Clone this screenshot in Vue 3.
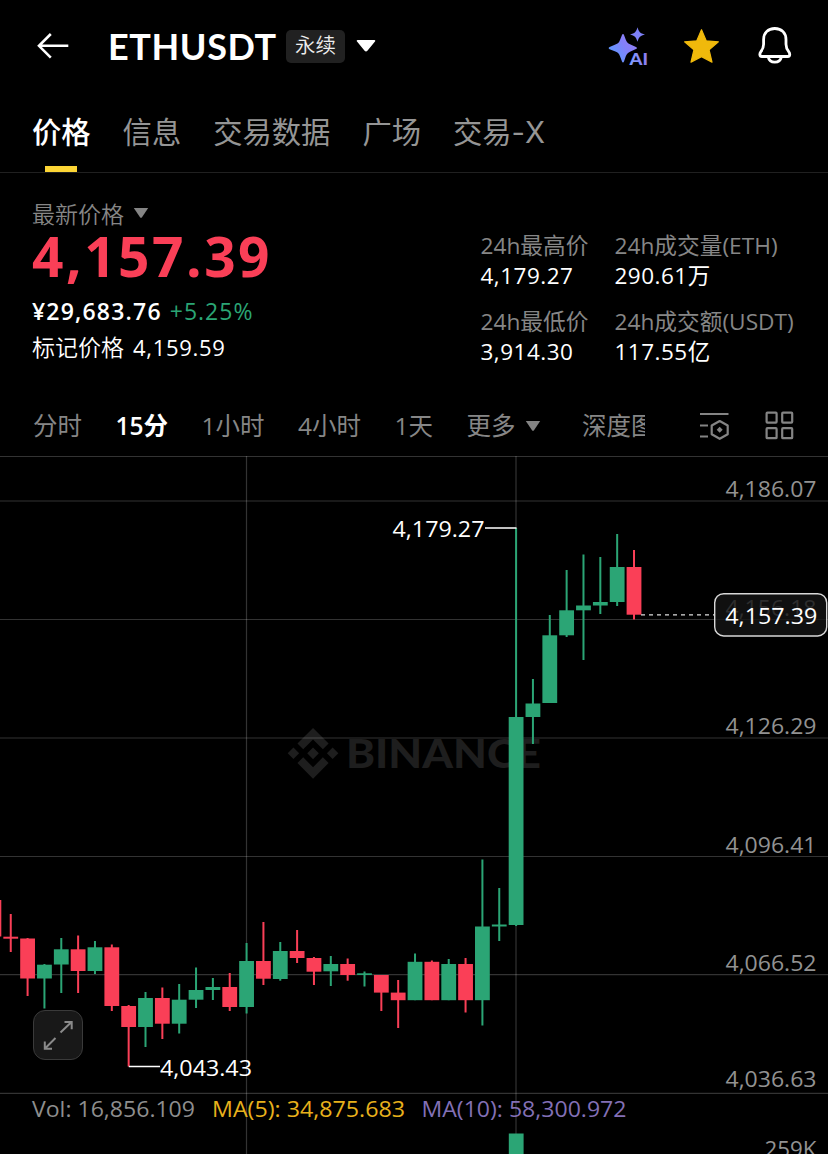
<!-- eslint-disable vue/multi-word-component-names -->
<!--
  组件名称: 合约行情页
  功能描述: 展示交易对最新价格、24h 数据以及 15 分钟 K 线图。
-->
<template>
  <div class="market-page">
    <!-- 顶部导航 -->
    <header class="top-bar">
      <svg class="back-icon" viewBox="36 32 34 28" fill="none" stroke="#fff" stroke-width="2.6">
        <path d="M68.3 45.8H39M50.8 34L39 45.8l11.8 11.8" />
      </svg>
      <h1 class="symbol">ETHUSDT</h1>
      <span class="badge">永续</span>
      <svg class="symbol-arrow" viewBox="0 0 20 14" fill="#fff">
        <path d="M1.6 1h16.8c.9 0 1.2.8.6 1.4l-7.6 9.4c-.8.9-2 .9-2.8 0L1 2.4C.4 1.8.7 1 1.6 1z" />
      </svg>
      <div class="top-actions">
        <svg class="action-icon" viewBox="608 25 42 42">
          <defs>
            <linearGradient id="ai-grad" gradientUnits="userSpaceOnUse" x1="610" y1="56" x2="640" y2="36">
              <stop offset="0" stop-color="#5a9bff" />
              <stop offset="0.5" stop-color="#8480fa" />
              <stop offset="1" stop-color="#9a80ee" />
            </linearGradient>
            <linearGradient id="ai-text" gradientUnits="userSpaceOnUse" x1="630" y1="60" x2="648" y2="58">
              <stop offset="0" stop-color="#7f9cff" />
              <stop offset="1" stop-color="#8f7af0" />
            </linearGradient>
          </defs>
          <path fill="url(#ai-grad)" d="M623 34c.5 0 .8.4 1 1l1.8 4.8c.9 2.5 1.9 3.5 4.2 4.4l6 2.7c1.2.5 1.2 1.7 0 2.2l-5.500 2.300c-2.700 1.200-3.700 2.200-4.700 4.900l-1.800 5.200c-.4 1.200-1.600 1.200-2 0l-2-5.200c-1-2.700-2-3.700-4.600-4.800l-5.800-2.300c-1.200-.5-1.200-1.600 0-2.100l5.800-2.500c2.500-1 3.600-2 4.600-4.600L622 35c.2-.6.5-1 1-1z" />
          <path fill="#7d80f7" d="M637.5 27.2c1.4 4.8 2.6 5.9 7.5 7.3-4.9 1.4-6.1 2.5-7.5 7.3-1.4-4.8-2.600-5.900-7.500-7.300 4.900-1.400 6.100-2.500 7.500-7.300z" />
          <text class="ai-text" x="629.5" y="65" textLength="18.5" lengthAdjust="spacingAndGlyphs" fill="url(#ai-text)">AI</text>
        </svg>
        <svg class="action-icon" viewBox="681 25 42 42">
          <path fill="#f0b90b" stroke="#f0b90b" stroke-width="1.2" stroke-linejoin="round" d="M701.5 29.7l4.7 11.1 12.2 1-9.3 8 2.9 12.3-10.5-5.5-10.5 5.5 2.9-12.3-9.3-8 12.2-1z" />
        </svg>
        <svg class="action-icon" viewBox="754 25 42 42" fill="none" stroke="#fff" stroke-width="2.8" stroke-linejoin="round">
          <path d="M774.8 28.5c-7 0-11.2 4.7-11.2 11v4.8c0 3.200-.7 4.800-2.700 7.300-1.500 1.900-1.500 4.900.9 4.900h26c2.400 0 2.400-3 .9-4.900-2-2.500-2.700-4.100-2.700-7.300v-4.800c0-6.300-4.200-11-11.200-11z" />
          <path d="M768.2 57c.7 3.2 3.3 5.2 6.6 5.2s5.9-2 6.6-5.2" />
        </svg>
      </div>
    </header>

    <!-- 页签 -->
    <nav class="tabs">
      <button
        v-for="tab in tabs"
        :key="tab"
        class="tab"
        :class="{ active: tab === activeTab }"
        @click="activeTab = tab"
      >
        {{ tab }}
      </button>
    </nav>

    <!-- 价格概览 -->
    <section class="ticker">
      <div class="price-block">
        <div class="price-label">
          最新价格
          <svg class="small-arrow" viewBox="0 0 16 12"><path d="M.8 1h14.4L9 10.2c-.5.7-1.5.7-2 0z" /></svg>
        </div>
        <div class="last-price">4,157.39</div>
        <div class="fiat-row">
          <span class="fiat">¥29,683.76</span>
          <span class="change">+5.25%</span>
        </div>
        <div class="mark-row">标记价格 <span class="mark-price">4,159.59</span></div>
      </div>
      <dl class="stats">
        <div v-for="item in stats" :key="item.label" class="stat">
          <dt>{{ item.label }}</dt>
          <dd>{{ item.value }}</dd>
        </div>
      </dl>
    </section>

    <!-- 周期切换 -->
    <div class="toolbar">
      <div class="intervals">
        <button
          v-for="item in intervals"
          :key="item"
          class="interval"
          :class="{ active: item === activeInterval }"
          @click="activeInterval = item"
        >
          {{ item }}
        </button>
        <button class="interval more">
          更多
          <svg class="small-arrow" viewBox="0 0 16 12"><path d="M.8 1h14.4L9 10.2c-.5.7-1.5.7-2 0z" /></svg>
        </button>
        <button class="interval">深度图</button>
      </div>
      <svg class="setting-icon" viewBox="698 410 34 32" fill="none" stroke="#848484" stroke-width="2.2">
        <path d="M700 414h28.5M700 425.5h8M700 436.5h8" />
        <path d="M719.7 421l8 4.5v8.8l-8 4.5-8-4.5v-8.8z" stroke-linejoin="round" />
        <path d="M719.7 426.8l3 3-3 3-3-3z" fill="#848484" stroke="none" />
      </svg>
      <svg class="grid-icon" viewBox="764 410 32 32" fill="none" stroke="#848484" stroke-width="2.2">
        <rect x="766.6" y="412.6" width="10" height="10" rx=".8" />
        <rect x="782.2" y="412.6" width="10" height="10" rx=".8" />
        <rect x="766.6" y="428.2" width="10" height="10" rx=".8" />
        <rect x="782.2" y="428.2" width="10" height="10" rx=".8" />
      </svg>
    </div>

    <!-- K 线图 -->
    <div class="chart">
      <svg class="chart-svg" viewBox="0 456 828 698">
        <!-- 水印 -->
        <g class="watermark">
          <path
            transform="translate(287.7 728) scale(.4)"
            d="M38.73 53.2l24.6-24.6 24.61 24.62 14.31-14.31L63.33 0l-38.9 38.9zM0 63.31L14.31 49l14.31 14.31-14.31 14.31zM38.73 73.41L63.33 98l24.61-24.6 14.32 14.29-38.93 38.92-38.9-38.89zM98 63.31L112.3 49l14.31 14.31-14.31 14.31zM77.83 63.3L63.32 48.78 48.79 63.3l14.53 14.53z"
          />
          <text x="346" y="767.5" textLength="195" lengthAdjust="spacingAndGlyphs">BINANCE</text>
        </g>

        <!-- 网格 -->
        <g class="grid-lines">
          <line v-for="y in gridY" :key="'h' + y" x1="0" x2="828" :y1="y" :y2="y" />
          <line v-for="x in gridX" :key="'v' + x" :x1="x" :x2="x" y1="456" y2="1154" />
        </g>

        <!-- 蜡烛 -->
        <g v-for="(c, i) in candles" :key="i" :fill="c[4] ? '#2ba575' : '#fa3f57'">
          <rect :x="candleX(i) - 1" :y="c[0]" width="2" :height="c[3] - c[0]" />
          <rect :x="candleX(i) - 7.4" :y="c[1]" width="14.8" :height="c[2] - c[1]" />
        </g>
        <rect x="508.8" y="1133.5" width="14.8" height="21" fill="#2ba575" />

        <!-- 价格刻度 -->
        <text
          v-for="s in scales"
          :key="s.text"
          class="scale"
          :x="816.5 - s.width"
          :y="s.y"
          :textLength="s.width"
          lengthAdjust="spacingAndGlyphs"
        >{{ s.text }}</text>

        <!-- 最高 / 最低价标注 -->
        <g class="mark">
          <path d="M485 528h31.5M128.8 1066.5H160" />
          <text x="392.5" y="536.5" textLength="92" lengthAdjust="spacingAndGlyphs">4,179.27</text>
          <text x="160" y="1075.5" textLength="92" lengthAdjust="spacingAndGlyphs">4,043.43</text>
        </g>

        <!-- 当前价 -->
        <line class="current-line" x1="641" x2="714" y1="614.8" y2="614.8" />
        <rect class="current-box" x="714.7" y="593.7" width="112" height="42.3" rx="9" />
        <text class="current-text" x="725.3" y="623.5" textLength="92" lengthAdjust="spacingAndGlyphs">4,157.39</text>

        <!-- 成交量指标 -->
        <g class="volume">
          <text x="32" y="1117" textLength="163" lengthAdjust="spacingAndGlyphs" fill="#8e8e8e">Vol: 16,856.109</text>
          <text x="212" y="1117" textLength="193" lengthAdjust="spacingAndGlyphs" fill="#e8b11c">MA(5): 34,875.683</text>
          <text x="421.5" y="1117" textLength="205" lengthAdjust="spacingAndGlyphs" fill="#8370b6">MA(10): 58,300.972</text>
        </g>
      </svg>

      <button class="expand-btn" title="全屏">
        <svg viewBox="33 1010 50 50" fill="none" stroke="#8a8a8a" stroke-width="2">
          <path d="M60.5 1032.5l11-10.5M64.5 1022h7.2v7.2M55.5 1038l-10.5 10.5M44.8 1041.5v7.3h7.2" />
        </svg>
      </button>
    </div>
  </div>
</template>

<script setup>
import { ref } from 'vue'

const tabs = ['价格', '信息', '交易数据', '广场', '交易-X']
const activeTab = ref('价格')

const intervals = ['分时', '15分', '1小时', '4小时', '1天']
const activeInterval = ref('15分')

const stats = [
  { label: '24h最高价', value: '4,179.27' },
  { label: '24h成交量(ETH)', value: '290.61万' },
  { label: '24h最低价', value: '3,914.30' },
  { label: '24h成交额(USDT)', value: '117.55亿' }
]

// 网格线位置
const gridY = [456.5, 501, 619.5, 738, 856.5, 974.7, 1093.3]
const gridX = [246.5, 516]

// 右侧价格刻度
const scales = [
  { text: '4,186.07', y: 497, width: 91 },
  { text: '4,156.18', y: 615.5, width: 91 },
  { text: '4,126.29', y: 734, width: 91 },
  { text: '4,096.41', y: 852.5, width: 91 },
  { text: '4,066.52', y: 970.5, width: 91 },
  { text: '4,036.63', y: 1087, width: 91 },
  { text: '259K', y: 1157, width: 52 }
]

// K 线数据: [影线顶, 实体顶, 实体底, 影线底, 是否上涨]
const candles = [
  [900, 900, 936.5, 936.5, 0],
  [914, 936.7, 938.7, 952, 0],
  [938, 938.5, 978.5, 996, 0],
  [964, 964.7, 978.5, 1008.5, 1],
  [938, 949.3, 964.5, 993, 1],
  [935.5, 949.3, 971, 993, 0],
  [941, 947.3, 971, 974, 1],
  [944.5, 947.3, 1006, 1011, 0],
  [1005, 1006, 1027, 1066.5, 0],
  [992, 998, 1027, 1047, 1],
  [987.5, 998, 1023.7, 1039, 0],
  [984, 999.7, 1023.7, 1033.5, 1],
  [967.5, 990, 999.7, 1008, 1],
  [978, 987, 990, 1000, 1],
  [973, 987, 1007, 1011, 0],
  [943, 961, 1007, 1013.5, 1],
  [922, 961, 978.7, 985, 0],
  [942, 951, 979, 980.7, 1],
  [930, 951, 958, 963, 0],
  [957, 958, 971.7, 985, 0],
  [956, 964, 971.3, 986, 1],
  [958.5, 964, 975, 980.7, 0],
  [971.5, 973.3, 975, 986.5, 1],
  [975, 975, 992.6, 1011, 0],
  [980, 992.6, 1000.2, 1028, 0],
  [953.5, 961.8, 1000.2, 1000.2, 1],
  [960.5, 961.8, 1000.2, 1000.2, 0],
  [959, 964, 1000.2, 1000.2, 1],
  [958, 964, 1000.2, 1012.5, 0],
  [859.5, 926.5, 1000.2, 1025.5, 1],
  [888, 924.5, 926.5, 941, 1],
  [528, 717, 925, 926, 1],
  [679, 703.5, 717, 744, 1],
  [615, 635.3, 703, 703, 1],
  [570, 610.3, 635.3, 637, 1],
  [554.5, 605.5, 610.3, 660, 1],
  [557, 602, 605.5, 614, 1],
  [534, 567, 602, 606, 1],
  [550, 567, 614.7, 619.5, 0]
]

/**
 * 蜡烛中心横坐标
 * @param {Number} i 序号
 */
const candleX = (i) => -6.1 + i * 16.845
</script>

<style>
body {
  background: #000;
}
</style>

<style scoped>
.market-page {
  width: 828px;
  height: 1154px;
  overflow: hidden;
  background: #000;
  color: #fff;
  font-family: 'Open Sans', 'Noto Sans CJK SC', sans-serif;
}

button {
  padding: 0;
  border: none;
  background: none;
  font-family: inherit;
  cursor: pointer;
}

/* 顶部导航 */
.top-bar {
  display: flex;
  align-items: center;
  height: 92px;
  padding: 0 32px 0 36px;
  box-sizing: border-box;
}

.back-icon {
  width: 34px;
  height: 28px;
}

.symbol {
  width: 168px;
  margin: 0;
  padding-left: 38px;
  font-family: Lato, sans-serif;
  font-size: 36px;
  font-weight: 700;
  letter-spacing: 0.6px;
  line-height: 48px;
  white-space: nowrap;
}

.badge {
  width: 59px;
  height: 33px;
  margin-left: 10px;
  border-radius: 5px;
  background: #212121;
  color: #eee;
  font-size: 20.5px;
  font-weight: 350;
  line-height: 31px;
  text-align: center;
}

.symbol-arrow {
  width: 20px;
  height: 14px;
  margin-left: 11px;
}

.top-actions {
  display: flex;
  gap: 31px;
  margin-left: auto;
}

.action-icon {
  width: 42px;
  height: 42px;
}

.ai-text {
  font-family: Lato, sans-serif;
  font-size: 16px;
  font-weight: 900;
}

/* 页签 */
.tabs {
  display: flex;
  gap: 32px;
  height: 80px;
  padding-left: 32px;
  border-bottom: 1px solid #202020;
}

.tab {
  position: relative;
  height: 80px;
  color: #959595;
  font-family: Inter, 'Noto Sans CJK SC', sans-serif;
  font-size: 29.3px;
  line-height: 82px;
  white-space: nowrap;
}

.tab.active {
  color: #fff;
  font-weight: 500;
}

.tab.active::after {
  content: '';
  position: absolute;
  left: 13px;
  bottom: 0;
  width: 32px;
  height: 6px;
  background: #fcd535;
}

/* 价格概览 */
.ticker {
  display: flex;
  height: 222px;
  padding-left: 32px;
}

.price-block {
  width: 448.5px;
  padding-top: 26px;
}

.price-label {
  display: flex;
  align-items: center;
  gap: 9px;
  height: 28px;
  color: #868686;
  font-size: 23px;
  font-weight: 350;
}

.small-arrow {
  width: 16px;
  height: 12px;
  fill: #848484;
}

.last-price {
  height: 68px;
  color: #fa3f57;
  font-size: 55px;
  font-weight: 700;
  letter-spacing: 2.5px;
  line-height: 58px;
}

.fiat-row {
  display: flex;
  gap: 8px;
  height: 32px;
  font-size: 23px;
  font-weight: 600;
  letter-spacing: 1.2px;
  line-height: 32px;
}

.change {
  color: #2ba575;
  font-weight: 500;
  letter-spacing: 1px;
}

.mark-row {
  height: 40px;
  font-size: 23px;
  font-weight: 350;
  line-height: 40px;
}

.mark-price {
  margin-left: 3px;
  font-size: 22px;
  font-weight: 400;
  letter-spacing: 0.7px;
}

.stats {
  display: grid;
  grid-template-columns: 134px auto;
  grid-auto-rows: 76px;
  align-content: start;
  margin: 0;
  padding-top: 58px;
}

.stat dt {
  height: 30px;
  color: #868686;
  font-size: 22.7px;
  font-weight: 400;
  line-height: 30px;
  white-space: nowrap;
}

.stat dd {
  margin: 0;
  font-size: 22.5px;
  letter-spacing: 0.5px;
  line-height: 30px;
}

/* 周期切换 */
.toolbar {
  display: flex;
  align-items: center;
  height: 61px;
  padding-left: 33px;
}

.intervals {
  display: flex;
  gap: 33.5px;
  width: 612px;
  overflow: hidden;
}

.interval {
  flex: none;
  color: #868686;
  font-size: 24.5px;
  font-weight: 400;
  line-height: 38px;
}

.interval.active {
  color: #fff;
  font-weight: 600;
}

.interval.more {
  display: flex;
  align-items: center;
  gap: 9px;
  margin-right: 8px;
}

.setting-icon {
  width: 34px;
  height: 32px;
  margin-left: 53px;
}

.grid-icon {
  width: 32px;
  height: 32px;
  margin-left: 32px;
}

/* 图表 */
.chart {
  position: relative;
  height: 698px;
}

.chart-svg {
  display: block;
  width: 828px;
  height: 698px;
}

.chart-svg text {
  font-size: 22.5px;
}

.watermark {
  fill: #1e1e1e;
}

.chart-svg .watermark text {
  font-family: Lato, sans-serif;
  font-size: 39px;
  font-weight: 900;
}

.grid-lines line {
  stroke: #fff;
  stroke-opacity: 0.2;
  stroke-width: 1.2;
}

.scale {
  fill: #929292;
}

.mark path {
  stroke: #fff;
  stroke-width: 1.5;
}

.mark text,
.current-text {
  fill: #fff;
  font-weight: 500;
}

.current-line {
  stroke: #ddd;
  stroke-width: 1.3;
  stroke-dasharray: 4 4;
}

.current-box {
  fill: #141414;
  fill-opacity: 0.8;
  stroke: #d8d8d8;
  stroke-width: 1.4;
}

.expand-btn {
  position: absolute;
  left: 33px;
  top: 554px;
  width: 50px;
  height: 50px;
  box-sizing: border-box;
  border: 1.5px solid #3a3a3a;
  border-radius: 12px;
  background: #181818;
}

.expand-btn svg {
  display: block;
  width: 50px;
  height: 50px;
  margin: -1px;
}
</style>
